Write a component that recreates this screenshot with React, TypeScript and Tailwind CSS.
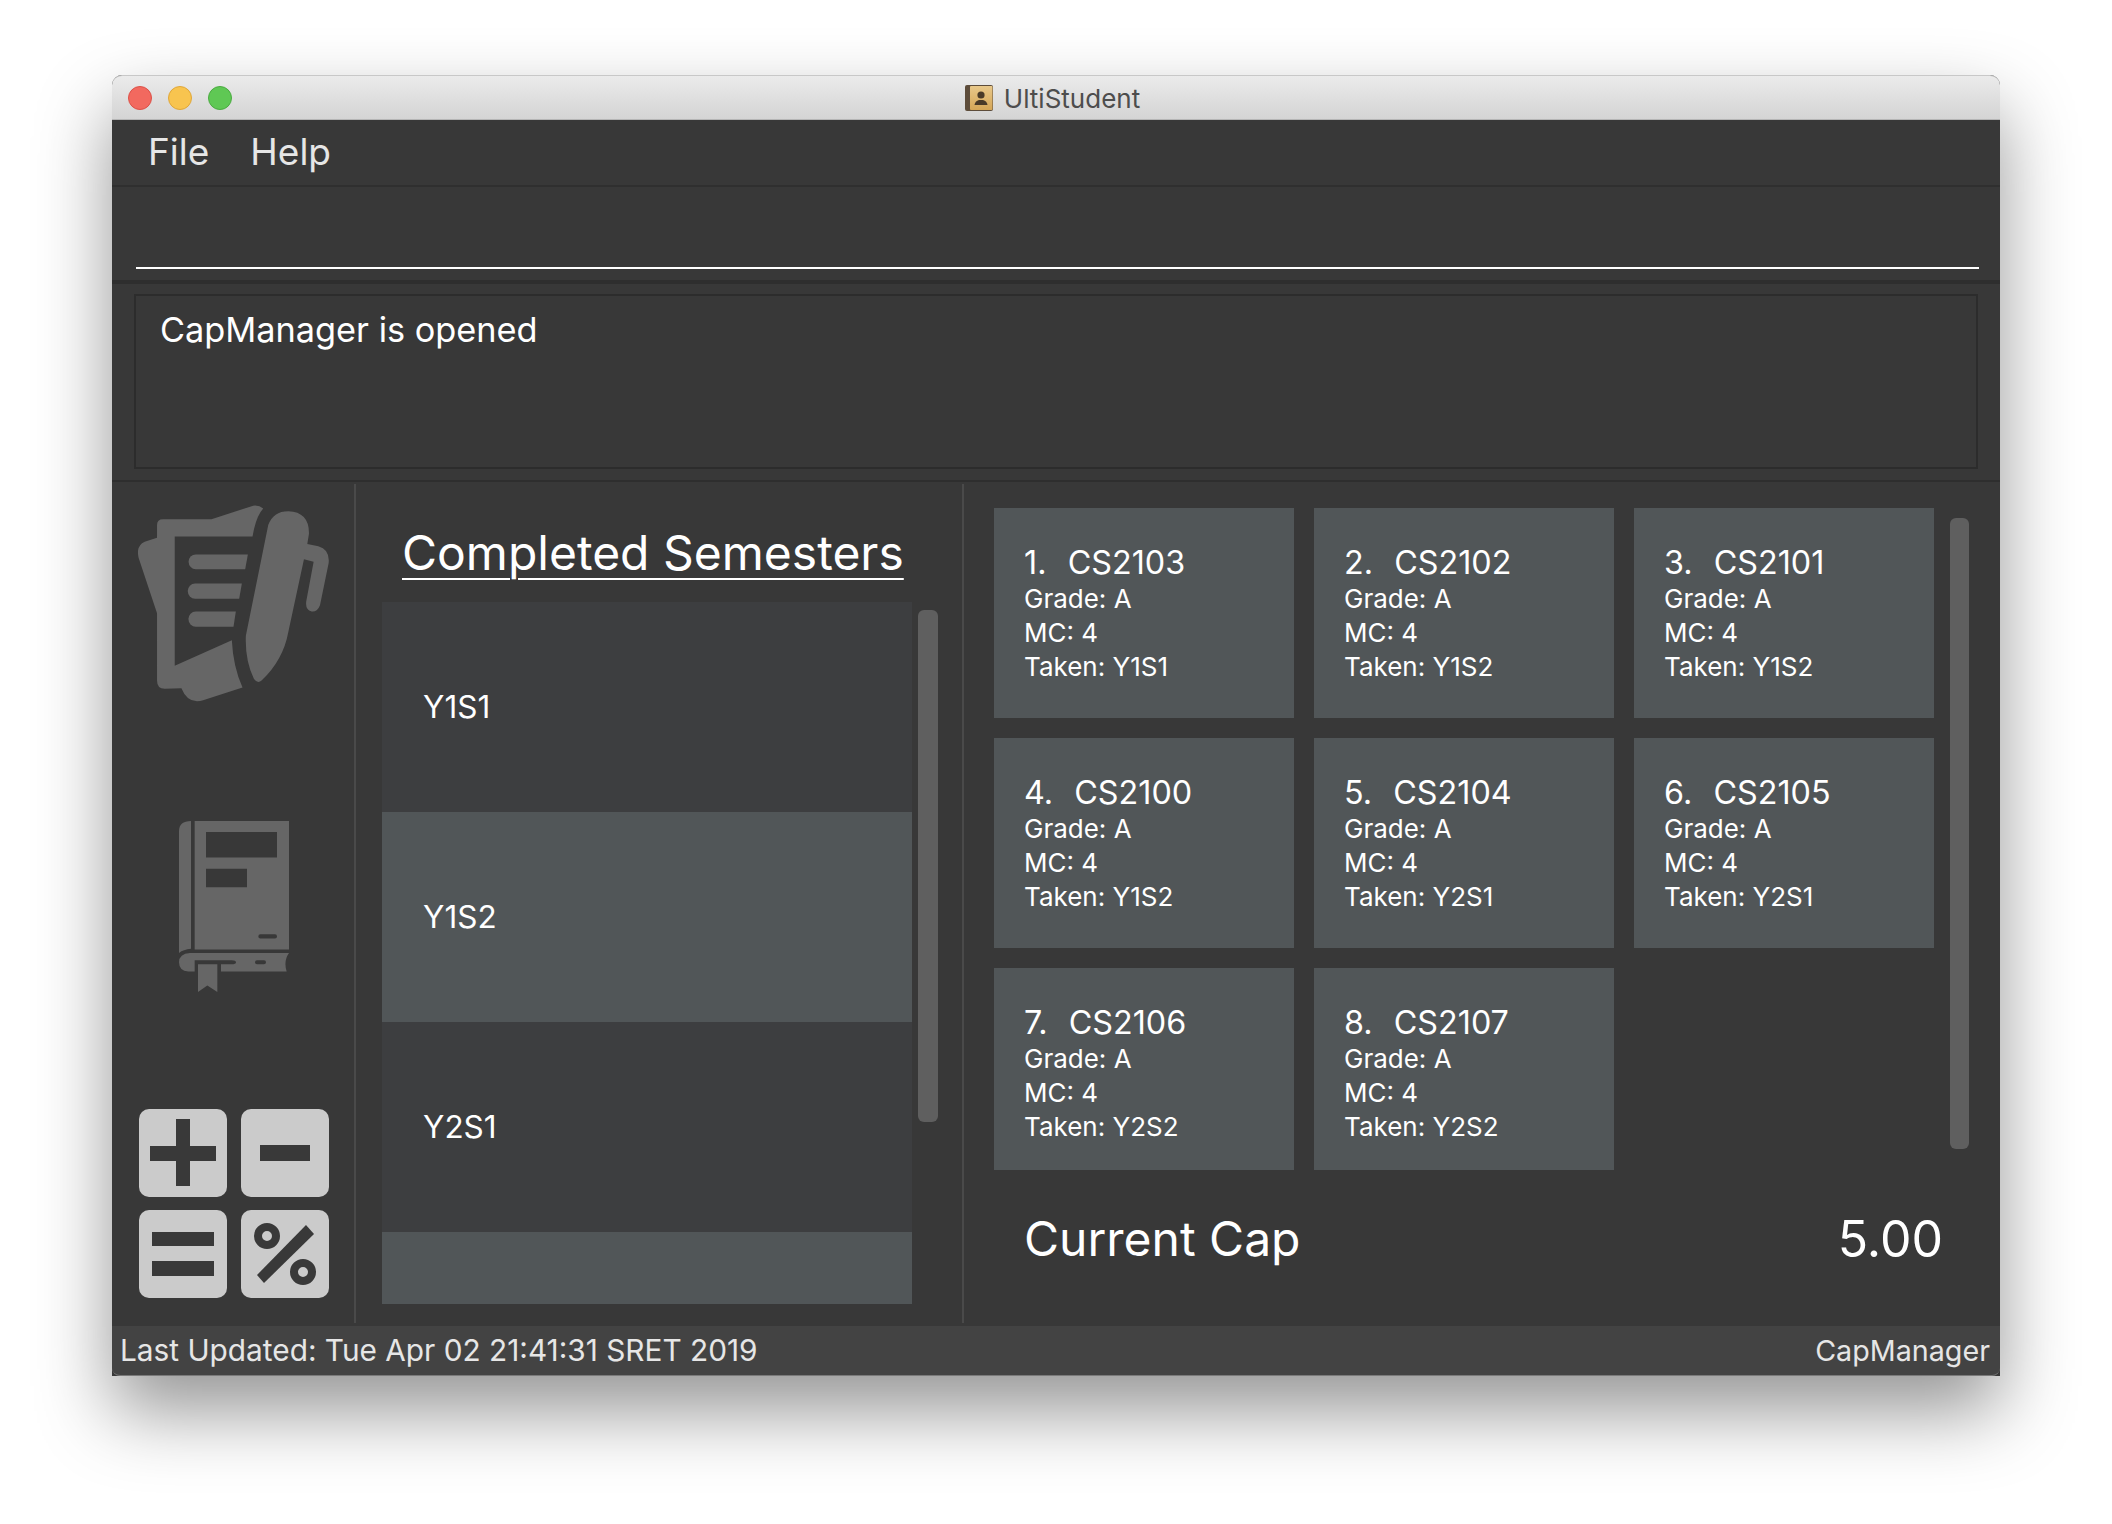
import React from "react";

const modules = [
  { no: "1.", code: "CS2103", taken: "Y1S1" },
  { no: "2.", code: "CS2102", taken: "Y1S2" },
  { no: "3.", code: "CS2101", taken: "Y1S2" },
  { no: "4.", code: "CS2100", taken: "Y1S2" },
  { no: "5.", code: "CS2104", taken: "Y2S1" },
  { no: "6.", code: "CS2105", taken: "Y2S1" },
  { no: "7.", code: "CS2106", taken: "Y2S2" },
  { no: "8.", code: "CS2107", taken: "Y2S2" },
];

function TitleIcon() {
  return (
    <svg width="28" height="26" viewBox="0 0 28 26" className="shrink-0">
      <defs>
        <linearGradient id="tan" x1="0" y1="0" x2="0" y2="1">
          <stop offset="0" stopColor="#e8c88a" />
          <stop offset="1" stopColor="#d5a657" />
        </linearGradient>
      </defs>
      <rect x="0" y="0" width="28" height="26" rx="2" fill="#5d4c3a" />
      <rect x="5" y="1" width="22.5" height="24" rx="1" fill="url(#tan)" />
      <circle cx="16" cy="10" r="3.6" fill="#4a3a28" />
      <path d="M9.5 20 Q10 16 14 15 L18 15 Q22 16 22.5 20 Z" fill="#4a3a28" />
    </svg>
  );
}

function NotesIcon() {
  return (
    <svg width="191" height="197" viewBox="85 72 572 570" preserveAspectRatio="none" fill="#666666">
      <path d="M142 130 Q142 113 160 113 L305 113 L430 74 Q448 72 460 82 Q438 105 428 163 L195 163 L195 537 L366 463 Q370 540 398 600 L280 637 Q235 650 215 602 L165 604 Q142 604 142 580 L142 385 L87 225 Q78 190 105 178 L142 167 Z" />
      <path d="M258 215 L414 215 L406 258 L258 258 A21.5 21.5 0 0 1 258 215 Z" />
      <path d="M256 299 L396 299 L388 343 L256 343 A22 22 0 0 1 256 299 Z" />
      <path d="M258 380 L378 380 L371 424 L258 424 A22 22 0 0 1 258 380 Z" />
      <path d="M475 130 Q490 90 535 90 Q598 92 597 155 L592 185 L625 191 Q660 200 656 240 L630 362 Q622 382 605 380 Q585 375 589 350 L611 236 L582 229 L535 440 Q520 520 455 580 Q443 590 432 575 Q405 520 408 450 Z" />
    </svg>
  );
}

function BookIcon() {
  return (
    <svg width="110" height="171" viewBox="207 990 330 495" preserveAspectRatio="none" fill="#666666" fillRule="evenodd">
      <path d="M207 1372 L207 1020 Q207 990 243 990 L243 1360 Q220 1362 207 1372 Z" />
      <path d="M254 990 L537 990 L537 1362 L254 1362 Z M288 1022 L288 1096 L501 1096 L501 1022 Z M288 1128 L288 1182 L411 1182 L411 1128 Z M451 1318 Q445 1318 445 1324 Q445 1330 451 1330 L495 1330 Q501 1330 501 1324 Q501 1318 495 1318 Z" />
      <path d="M240 1372 L537 1372 Q520 1395 530 1426 L333 1426 L333 1405 L365 1405 Q378 1405 378 1399 Q378 1393 365 1393 L254 1393 L254 1426 L235 1426 Q207 1424 207 1399 Q207 1374 240 1372 Z M441 1393 Q435 1393 435 1399 Q435 1405 441 1405 L462 1405 Q468 1405 468 1399 Q468 1393 462 1393 Z" />
      <path d="M264 1405 L322 1405 L322 1485 L292 1466 L264 1485 Z" />
    </svg>
  );
}

function CalcButton({ children }: { children: React.ReactNode }) {
  return (
    <div className="w-[88px] h-[88px] rounded-[10px] bg-[#cbcbcb]">
      <svg width="88" height="88" viewBox="0 0 88 88" fill="#393939">
        {children}
      </svg>
    </div>
  );
}

function ModuleCard({ no, code, taken }: { no: string; code: string; taken: string }) {
  return (
    <div className="bg-[#515658] pl-[30px] pt-[35px] text-white overflow-hidden">
      <div className="text-[32.3px] leading-[39px] whitespace-pre">
        {no}  <span className="ml-[3px]">{code}</span>
      </div>
      <div className="text-[26px] leading-[34px]">Grade: A</div>
      <div className="text-[26px] leading-[34px]">MC: 4</div>
      <div className="text-[26px] leading-[34px]">Taken: {taken}</div>
    </div>
  );
}

export default function App() {
  return (
    <div className="w-[2112px] h-[1524px] bg-white pt-[75px] pl-[112px] overflow-hidden font-['Inter',sans-serif]">
      <div className="w-[1888px] h-[1301px] flex flex-col bg-[#383838] rounded-t-[10px] shadow-[0_35px_75px_rgba(0,0,0,0.42)]">
        {/* title bar */}
        <div className="h-[45px] shrink-0 rounded-t-[10px] border-t border-[#c8c8c8] border-b border-b-[#b5b5b5] bg-gradient-to-b from-[#ebebeb] to-[#d4d4d4] relative flex items-center justify-center pr-[7px]">
          <div className="absolute left-[16px] top-[10px] flex gap-[16px]">
            <span className="w-[24px] h-[24px] rounded-full bg-[#f2695f] border border-[#dc5148]" />
            <span className="w-[24px] h-[24px] rounded-full bg-[#f8c44f] border border-[#e0a73a]" />
            <span className="w-[24px] h-[24px] rounded-full bg-[#5fc854] border border-[#4bab41]" />
          </div>
          <div className="flex items-center gap-[11px] text-[26px] leading-none text-[#4d4d4d]">
            <TitleIcon />
            <span className="pt-[2px]">UltiStudent</span>
          </div>
        </div>

        {/* menu */}
        <div className="h-[67px] shrink-0 border-b-2 border-[#2f2f2f] flex items-center gap-[41px] pl-[36px] pb-[2px] text-[37px] text-[#e6e6e6]">
          <span>File</span>
          <span>Help</span>
        </div>

        {/* command box */}
        <div className="h-[97px] shrink-0 border-b-4 border-[#2e2e2e] px-[24px] pt-[80px]">
          <div className="h-[2px] bg-white w-[1843px]" />
        </div>

        {/* result display */}
        <div className="h-[198px] shrink-0 border-b-2 border-[#2e2e2e] px-[22px] pt-[10px]">
          <div className="h-[175px] border-2 border-[#2c2c2c] pl-[24px] pt-[12px] text-[34.3px] leading-[44px] text-white">
            CapManager is opened
          </div>
        </div>

        {/* main panes */}
        <div className="flex-1 flex min-h-0">
          <div className="w-[242px] shrink-0 flex flex-col pt-[23px]">
            <div className="pl-[26px]">
              <NotesIcon />
            </div>
            <div className="pl-[67px] mt-[119px]">
              <BookIcon />
            </div>
            <div className="pl-[27px] mt-[117px] grid grid-cols-[88px_88px] gap-x-[14px] gap-y-[13px]">
              <CalcButton>
                <rect x="37" y="10" width="14" height="67" />
                <rect x="11" y="37" width="66" height="15" />
              </CalcButton>
              <CalcButton>
                <rect x="19" y="36" width="50" height="16" />
              </CalcButton>
              <CalcButton>
                <rect x="13" y="22" width="62" height="14" />
                <rect x="13" y="51" width="62" height="15" />
              </CalcButton>
              <CalcButton>
                <polygon points="65,15 73,24 23,73 16,65" />
                <path fillRule="evenodd" d="M13 26 a13 13 0 1 0 26 0 a13 13 0 1 0 -26 0 Z M21 26 a5 5 0 1 1 10 0 a5 5 0 1 1 -10 0 Z" />
                <path fillRule="evenodd" d="M49 62 a13 13 0 1 0 26 0 a13 13 0 1 0 -26 0 Z M57 62 a5 5 0 1 1 10 0 a5 5 0 1 1 -10 0 Z" />
              </CalcButton>
            </div>
          </div>
          <div className="w-[2px] shrink-0 bg-[#4a4a4a] mt-[2px] mb-[3px]" />

          {/* semesters */}
          <div className="w-[606px] shrink-0 flex flex-col pl-[26px]">
            <div className="h-[120px] shrink-0 pl-[20px] pt-[41px]">
              <span className="text-[48px] leading-[60px] text-white underline underline-offset-[8px] decoration-2">
                Completed Semesters
              </span>
            </div>
            <div className="flex gap-[6px]">
              <div className="w-[530px] h-[702px] text-[31.5px] text-white overflow-hidden">
                <div className="h-[210px] bg-[#3d3e40] flex items-center pl-[41px]">Y1S1</div>
                <div className="h-[210px] bg-[#515658] flex items-center pl-[41px]">Y1S2</div>
                <div className="h-[210px] bg-[#3d3e40] flex items-center pl-[41px]">Y2S1</div>
                <div className="h-[72px] bg-[#515658]" />
              </div>
              <div className="w-[20px] h-[512px] mt-[8px] rounded-[6px] bg-[#5f5f5f]" />
            </div>
          </div>
          <div className="w-[2px] shrink-0 bg-[#4a4a4a] mt-[2px] mb-[3px]" />

          {/* modules */}
          <div className="flex-1 flex flex-col pl-[30px] pt-[26px]">
            <div className="flex items-start">
              <div className="grid grid-cols-[300px_300px_300px] grid-rows-[210px_210px_202px] gap-[20px]">
                {modules.map((m) => (
                  <ModuleCard key={m.no} {...m} />
                ))}
              </div>
              <div className="w-[19px] h-[631px] ml-[16px] mt-[10px] rounded-[6px] bg-[#5f5f5f]" />
            </div>
            <div className="flex justify-between items-center w-[919px] ml-[30px] mt-[39px] text-[48px] leading-[60px] text-white">
              <span>Current Cap</span>
              <span className="text-[50px]">5.00</span>
            </div>
          </div>
        </div>

        {/* status bar */}
        <div className="h-[50px] shrink-0 rounded-b-[8px] bg-[#434343] border-b border-[#7a7a7a] flex items-center justify-between pl-[8px] pr-[10px] text-[#e6e6e6]">
          <span className="text-[29.8px]">Last Updated: Tue Apr 02 21:41:31 SRET 2019</span>
          <span className="text-[28.7px]">CapManager</span>
        </div>
      </div>
    </div>
  );
}
